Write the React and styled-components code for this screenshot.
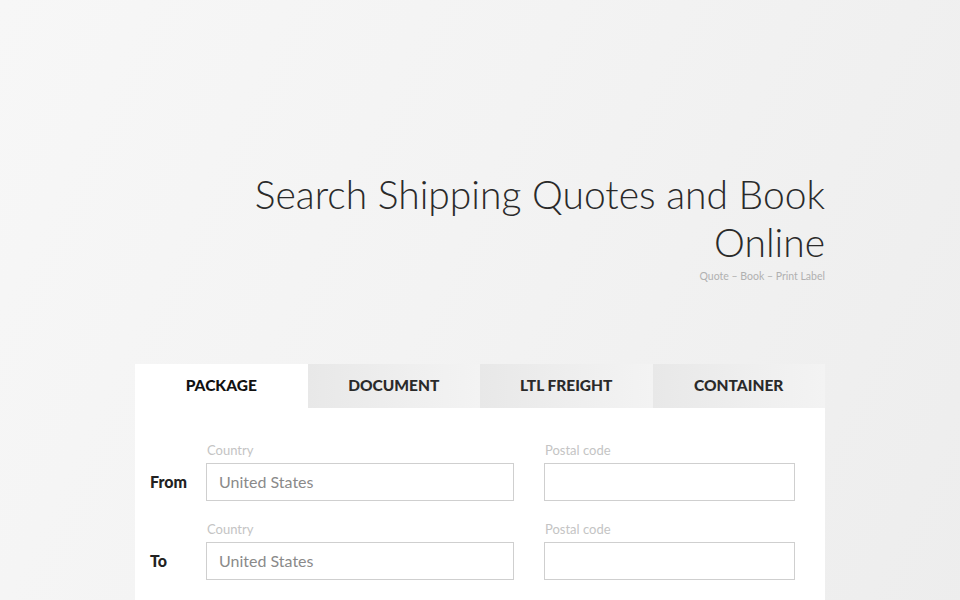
import styled, { createGlobalStyle } from 'styled-components';

const GlobalStyle = createGlobalStyle`
  html, body {
    margin: 0;
    padding: 0;
  }
  body {
    font-family: "Lato", "Noto Sans", sans-serif;
    background: linear-gradient(115deg, #f7f7f7 0%, #f3f3f3 45%, #ededed 100%);
    min-height: 600px;
    color: #222;
  }
`;

const tabs = ['Package', 'Document', 'LTL Freight', 'Container'];

const rows = [
  { label: 'From', country: 'United States' },
  { label: 'To', country: 'United States' },
];

export default function App() {
  return (
    <>
      <GlobalStyle />
      <Page>
        <Hero>
          <Title>Search Shipping Quotes and Book Online</Title>
          <Subtitle>Quote – Book – Print Label</Subtitle>
        </Hero>

        <Panel>
          <TabBar>
            {tabs.map((t, i) => (
              <Tab key={t} $active={i === 0}>{t}</Tab>
            ))}
          </TabBar>
          <Form>
            {rows.map((row) => (
              <Row key={row.label}>
                <RowLabel>{row.label}</RowLabel>
                <Field $width={308}>
                  <FieldLabel>Country</FieldLabel>
                  <Input defaultValue={row.country} readOnly />
                </Field>
                <Field $width={251}>
                  <FieldLabel>Postal code</FieldLabel>
                  <Input defaultValue="" />
                </Field>
              </Row>
            ))}
          </Form>
        </Panel>
      </Page>
    </>
  );
}

const Page = styled.main`
  width: 690px;
  margin: 0 auto;
  padding-top: 170px;
`;

const Hero = styled.header`
  display: flex;
  flex-direction: column;
  align-items: flex-end;
  text-align: right;
`;

const Title = styled.h1`
  margin: 0;
  max-width: 590px;
  font-weight: 300;
  font-size: 39px;
  line-height: 48px;
  color: #2a2a2a;
`;

const Subtitle = styled.div`
  margin-top: 4px;
  font-size: 10.5px;
  color: #b0b0b0;
`;

const Panel = styled.section`
  margin-top: 82px;
`;

const TabBar = styled.nav`
  display: grid;
  grid-template-columns: repeat(4, 1fr);
  height: 44px;
`;

const Tab = styled.div`
  display: flex;
  align-items: center;
  justify-content: center;
  padding-bottom: 2px;
  text-transform: uppercase;
  font-weight: 900;
  font-size: 15.5px;
  color: ${(p) => (p.$active ? '#111' : '#2a2a2a')};
  background: ${(p) =>
    p.$active ? '#fff' : 'linear-gradient(90deg, #e8e8e8 0%, #efefef 60%, #f3f3f3 100%)'};
`;

const Form = styled.div`
  background: #fff;
  padding: 36px 30px 60px 15px;
  display: flex;
  flex-direction: column;
  gap: 22px;
`;

const Row = styled.div`
  display: flex;
  align-items: flex-end;
  gap: 30px;
`;

const RowLabel = styled.div`
  width: 56px;
  margin-right: -30px;
  font-weight: 900;
  font-size: 16px;
  color: #222;
  line-height: 38px;
`;

const Field = styled.label`
  display: flex;
  flex-direction: column;
  width: ${(p) => p.$width}px;
`;

const FieldLabel = styled.span`
  font-size: 13px;
  color: #c4c4c4;
  line-height: 13px;
  margin: 0 0 6px 1px;
`;

const Input = styled.input`
  box-sizing: border-box;
  height: 38px;
  width: 100%;
  border: 1px solid #cfcfcf;
  padding: 0 12px 2px;
  font-family: inherit;
  font-size: 16px;
  color: #8a8a8a;
  outline: none;
  background: #fff;
`;
